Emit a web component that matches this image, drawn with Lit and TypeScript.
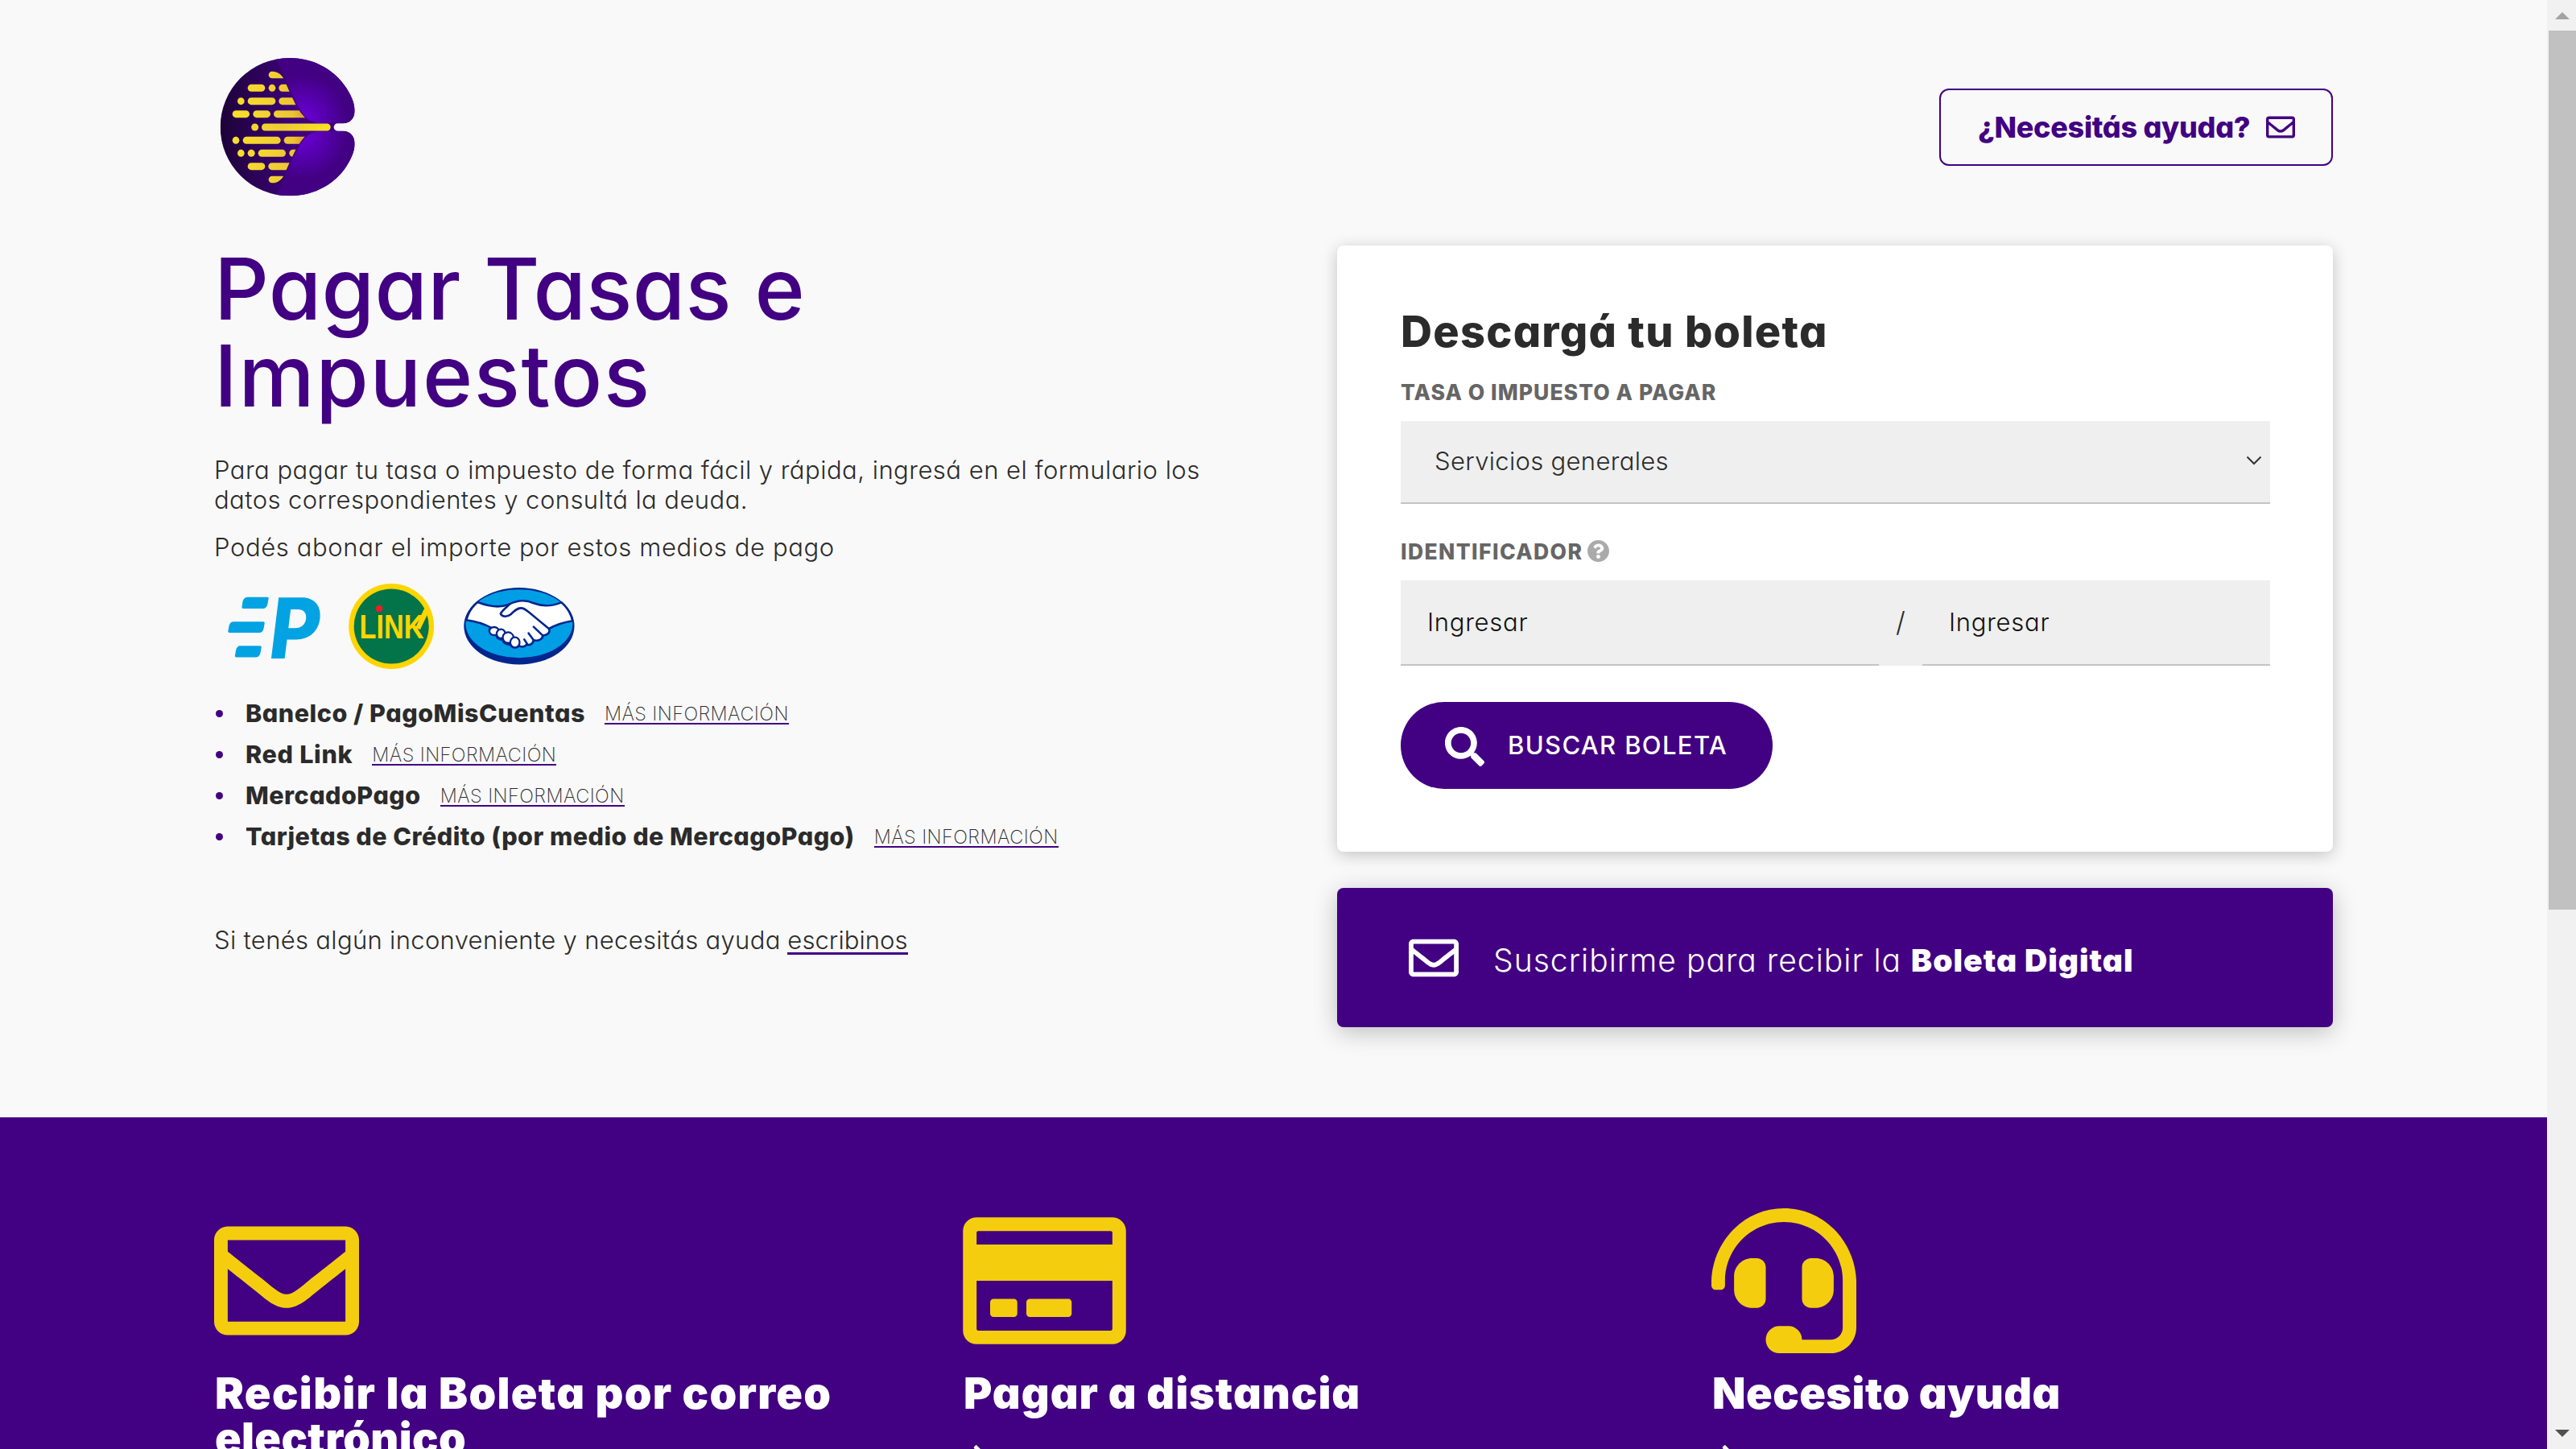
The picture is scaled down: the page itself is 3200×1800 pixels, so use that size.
import { LitElement, html, svg, css } from "lit";
import { customElement } from "lit/decorators.js";
import { styleMap } from "lit/directives/style-map.js";

/** Text run with its own tracking, in em. */
const run = (text: string, tracking: number) =>
  html`<span class="run" style=${styleMap({ letterSpacing: `${tracking}em` })}>${text}</span>`;

const envelope = html`<svg class="icon" viewBox="0 0 512 512"><path fill="currentColor" d="M464 64H48C21.49 64 0 85.49 0 112v288c0 26.51 21.49 48 48 48h416c26.51 0 48-21.49 48-48V112c0-26.51-21.49-48-48-48zm0 48v40.805c-22.422 18.259-58.168 46.651-134.587 106.49-16.841 13.247-50.201 45.072-73.413 44.701-23.208.375-56.579-31.459-73.413-44.701C106.18 199.465 70.425 171.067 48 152.805V112h416zM48 400V214.398c22.914 18.251 55.409 43.862 104.938 82.646 21.857 17.205 60.134 55.186 103.062 54.955 42.717.231 80.509-37.199 103.053-54.947 49.528-38.783 82.032-64.401 104.947-82.653V400H48z"/></svg>`;
const card = html`<svg class="icon wide" viewBox="0 0 576 512"><path fill="currentColor" d="M527.9 32H48.1C21.5 32 0 53.5 0 80v352c0 26.5 21.5 48 48.1 48h479.8c26.6 0 48.1-21.5 48.1-48V80c0-26.5-21.5-48-48.1-48zM54.1 80h467.8c3.3 0 6 2.7 6 6v42H48.1V86c0-3.3 2.7-6 6-6zm467.8 352H54.1c-3.3 0-6-2.7-6-6V256h479.8v170c0 3.3-2.7 6-6 6zM192 332v40c0 6.6-5.4 12-12 12h-72c-6.6 0-12-5.4-12-12v-40c0-6.6 5.4-12 12-12h72c6.6 0 12 5.4 12 12zm192 0v40c0 6.6-5.4 12-12 12H236c-6.6 0-12-5.4-12-12v-40c0-6.6 5.4-12 12-12h136c6.6 0 12 5.4 12 12z"/></svg>`;
const headset = html`<svg class="icon" viewBox="0 0 512 512"><path fill="currentColor" d="M192 208c0-17.67-14.33-32-32-32h-16c-35.35 0-64 28.65-64 64v48c0 35.35 28.65 64 64 64h16c17.67 0 32-14.33 32-32V208zm176 144c35.35 0 64-28.65 64-64v-48c0-35.35-28.65-64-64-64h-16c-17.67 0-32 14.33-32 32v112c0 17.67 14.33 32 32 32h16zM256 0C113.18 0 4.58 118.83 0 256v16c0 8.84 7.16 16 16 16h16c8.84 0 16-7.16 16-16v-16c0-114.69 93.31-208 208-208s208 93.31 208 208h-.12c.08 2.43.12 165.72.12 165.72 0 23.35-18.93 42.28-42.28 42.28H320c0-26.51-21.49-48-48-48h-32c-26.51 0-48 21.49-48 48s21.49 48 48 48h181.72c49.86 0 90.28-40.42 90.28-90.28V256C507.42 118.83 398.82 0 256 0z"/></svg>`;
const search = html`<svg class="icon" viewBox="0 0 512 512"><path fill="currentColor" d="M505 442.7L405.3 343c-4.5-4.5-10.6-7-17-7H372c27.6-35.3 44-79.7 44-128C416 93.1 322.9 0 208 0S0 93.1 0 208s93.1 208 208 208c48.3 0 92.7-16.4 128-44v16.3c0 6.4 2.5 12.5 7 17l99.7 99.7c9.4 9.4 24.6 9.4 33.9 0l28.3-28.3c9.4-9.4 9.4-24.6.1-34zM208 336c-70.7 0-128-57.2-128-128 0-70.7 57.2-128 128-128 70.7 0 128 57.2 128 128 0 70.7-57.2 128-128 128z"/></svg>`;
const question = html`<svg class="icon hint" viewBox="8 8 496 496"><path fill="currentColor" d="M504 256c0 136.997-111.043 248-248 248S8 392.997 8 256C8 119.083 119.043 8 256 8s248 111.083 248 248zM262.655 90c-54.497 0-89.255 22.957-116.549 63.758-3.536 5.286-2.353 12.415 2.715 16.258l34.699 26.31c5.205 3.947 12.621 3.008 16.665-2.122 17.864-22.658 30.113-35.797 57.303-35.797 20.429 0 45.698 13.148 45.698 32.958 0 14.976-12.363 22.667-32.534 33.976C247.128 238.528 216 254.941 216 296v4c0 6.627 5.373 12 12 12h56c6.627 0 12-5.373 12-12v-1.333c0-28.462 83.186-29.647 83.186-106.667 0-58.002-60.165-102-116.531-102zM256 338c-25.365 0-46 20.635-46 46 0 25.364 20.635 46 46 46s46-20.636 46-46c0-25.364-20.635-46-46-46z"/></svg>`;
const chevronRight = html`<svg class="next" viewBox="0 0 320 512"><path fill="currentColor" d="M285.476 272.971L91.132 467.314c-9.373 9.373-24.569 9.373-33.941 0l-22.667-22.667c-9.357-9.357-9.375-24.522-.04-33.901L188.505 256 34.484 101.255c-9.335-9.379-9.317-24.544.04-33.901l22.667-22.667c9.373-9.373 24.569-9.373 33.941 0L285.475 239.03c9.373 9.372 9.373 24.568.001 33.941z"/></svg>`;

/** [x start, x end, y centre] of every pill in the logo. */
const pills: number[][] = [
  [203, 268, 178], [281, 307, 178], [319, 400, 178],
  [165, 191, 227], [203, 307, 227], [319, 420, 227],
  [146, 210, 275], [223, 288, 275], [300, 450, 275],
  [146, 172, 373], [185, 326, 373], [338, 450, 373],
  [165, 191, 421], [203, 230, 421], [242, 345, 421], [358, 420, 421],
  [203, 268, 470], [280, 400, 470],
];
const pill = ([a, b, y]: number[]) =>
  svg`<rect x=${a} y=${y - 13.5} width=${b - a} height="27" rx="13.5"/>`;

const logo = html`<svg class="logo" viewBox="78 54 540 540">
  <defs>
    <linearGradient id="body" gradientUnits="userSpaceOnUse" x1="101" y1="0" x2="400" y2="0"><stop offset="0" stop-color="#1d0338"/><stop offset="1" stop-color="#400080"/></linearGradient>
    <radialGradient id="glow" gradientUnits="userSpaceOnUse" cx="412" cy="288" r="160"><stop offset="0" stop-color="#6900d6"/><stop offset="1" stop-color="#420082"/></radialGradient>
    <radialGradient id="glow2" gradientUnits="userSpaceOnUse" cx="412" cy="358" r="160"><stop offset="0" stop-color="#6900d6"/><stop offset="1" stop-color="#420082"/></radialGradient>
    <linearGradient id="gold" gradientUnits="userSpaceOnUse" x1="146" y1="0" x2="412" y2="0"><stop offset="0" stop-color="#fae02a"/><stop offset=".6" stop-color="#f0cf33"/><stop offset=".85" stop-color="#ecc433"/><stop offset="1" stop-color="#dfa02a"/></linearGradient>
    <linearGradient id="beam" gradientUnits="userSpaceOnUse" x1="217" y1="0" x2="512" y2="0"><stop offset="0" stop-color="#f4d82c"/><stop offset=".4" stop-color="#eccb33"/><stop offset="1" stop-color="#fae322"/></linearGradient>
    <clipPath id="disc"><path d="M358 66C455 66 538 115 581 195C595 220 601 240 602 262C602 290 585 310 558 310H538a14 14 0 0 0 0 28H558C585 338 602 358 602 386C601 408 595 428 581 453C538 532 455 580 358 580A257 257 0 0 1 358 66Z"/></clipPath>
    <clipPath id="wedge"><path d="M100 60H300L337 142L358 190L382 240Q398 270 422 295V352Q398 378 382 408L358 458L337 506L300 590H100Z"/></clipPath>
  </defs>
  <g clip-path="url(#disc)">
    <rect x="78" y="54" width="540" height="540" fill="url(#body)"/>
    <path fill="url(#glow)" d="M300 54C338 120 360 195 388 240C410 280 430 308 475 310H640V54Z"/>
    <path fill="url(#glow2)" d="M300 594C338 528 360 453 388 408C410 368 430 340 475 338H640V594Z"/>
  </g>
  <g fill="url(#gold)" clip-path="url(#wedge)">
    ${pills.map(pill)}
    <path d="M294 116C315 116 328 128 337 142H294a13 13 0 0 1 0-26ZM294 532C315 532 328 520 337 506H294a13 13 0 0 0 0 26Z"/>
  </g>
  <g fill="url(#beam)"><circle cx="230" cy="324" r="13.5"/><rect x="255" y="310.500" width="257" height="27" rx="13.5"/></g>
</svg>`;

const payments = html`<svg class="payments" viewBox="16 40 480 120">
  <g fill="#03a3e3">
    <path d="M58 61.700H82q2 0 1.600 2L82.500 70q-1.300 6-6 6H52q-1.800 0-1.500-2L51.500 67q1.500-5.300 6.500-5.300ZM40.500 92.300H77q2 0 1.700 2L77.500 101q-1.200 5-5.500 5H35q-2 0-1.600-2L34.500 97.500q1.200-5.200 6-5.200ZM48.500 122.300H73q2 0 1.700 2L73.500 131q-1.200 5.500-6 5.500H43.500q-2 0-1.600-2L43 128q1.200-5.700 5.500-5.700Z"/>
    <text transform="translate(81.500 137.500) skewX(-7)" font-family="Inter" font-weight="800" font-size="104" textLength="63" lengthAdjust="spacingAndGlyphs">P</text>
  </g>
  <circle cx="236.200" cy="98" r="53" fill="#ffd500"/><circle cx="236.200" cy="98" r="46.500" fill="#037349"/>
  <path d="M266 100L276 78L281 71L283 79L272 102Z" fill="#ffd500"/>
  <text x="196.500" y="113.300" fill="#ffd500" font-family="Liberation Sans" font-weight="700" font-size="42" textLength="80" lengthAdjust="spacingAndGlyphs">LINK</text>
  <circle cx="221" cy="76" r="4.300" fill="#ee1c25"/>
  <ellipse cx="394.900" cy="97.700" rx="68.600" ry="47.700" fill="#00258e"/>
  <ellipse cx="394.900" cy="94.700" rx="66.500" ry="42.500" fill="#009ee5"/>
  <g transform="scale(.4464 .3333)" fill="#fff" stroke="#00258e" stroke-linejoin="round" stroke-linecap="round">
    <path vector-effect="non-scaling-stroke" stroke-width="2.600" d="M769 204C800 220 830 226 855 213C880 196 905 195 925 208C950 221 975 220 1002 205Q1028 235 1033 274C1005 280 985 290 968 303C972 318 962 328 951 328C949 344 937 350 925 346C922 362 912 366 905 362C900 372 888 372 884 366C878 378 864 374 860 362C846 362 838 352 840 344C828 344 820 336 822 326C806 328 798 312 804 302L806 299C785 284 765 276 738 271Q744 232 769 204Z"/>
    <g stroke-width="2.300"><ellipse vector-effect="non-scaling-stroke" cx="815" cy="312" rx="13" ry="15"/><ellipse vector-effect="non-scaling-stroke" cx="834" cy="322" rx="12" ry="17"/><ellipse vector-effect="non-scaling-stroke" cx="854" cy="336" rx="15" ry="20"/><ellipse vector-effect="non-scaling-stroke" cx="873" cy="354" rx="13" ry="19"/></g>
    <path stroke="none" d="M822 290L856 300L866 320L884 334L892 350L930 330L930 270Z"/>
    <path fill="none" vector-effect="non-scaling-stroke" stroke-width="2.600" d="M858 212C847 226 837 236 833 247C838 261 853 259 861 250C870 238 878 226 890 226C900 226 906 236 914 244L968 304M925 296L950 328M911 320L925 346M899 343L908 362"/>
  </g>
</svg>`;

const methods: [string, number][] = [
  ["Banelco / PagoMisCuentas", 0.0177],
  ["Red Link", 0.0233],
  ["MercadoPago", 0.0158],
  ["Tarjetas de Crédito (por medio de MercagoPago)", 0.0163],
];

@customElement("app-root")
export class AppRoot extends LitElement {
  static styles = css`
    :host { display: block; font-family: Inter, "Open Sans", sans-serif; font-feature-settings: "cv11"; color: #2b2b2b; }
    * { box-sizing: border-box; }
    h1, h2, h3, p, ul { margin: 0; padding: 0; font-weight: inherit; }
    .window { display: flex; height: 1800px; overflow: hidden; background: #f9f9f9; }
    .page { flex: 1; min-width: 0; height: 1800px; overflow: hidden; }
    .run { white-space: nowrap; }
    .icon { display: block; flex: none; }
    .hero { height: 1388px; padding: 68px 266px 0; }
    .top { display: flex; justify-content: space-between; align-items: center; height: 180px; }
    .logo { width: 180px; height: 180px; display: block; }
    .help { width: 489px; height: 96px; border: 2px solid #420082; border-radius: 12px; display: flex; align-items: center; justify-content: space-between; padding: 0 45px 0 46px; color: #420082; font-size: 36px; font-weight: 800; }
    .help .icon { width: 36px; height: 36px; }
    .columns { display: flex; justify-content: space-between; align-items: flex-start; margin-top: 56px; }
    .intro { width: 1290px; }
    h1 { font-size: 106px; font-weight: 500; line-height: 108px; color: #420082; padding-top: 1px; }
    h1 .run, h3 .run { display: block; }
    .copy { font-size: 31px; font-weight: 300; line-height: 37px; }
    .lead { margin-top: 44px; }
    .lead .run { display: block; }
    .ways { margin-top: 22px; }
    .payments { display: block; width: 480px; height: 120px; margin-top: 22px; }
    ul { list-style: none; margin-top: 20px; }
    li { display: flex; align-items: center; height: 51px; font-size: 30.5px; font-weight: 800; }
    li::before { content: ""; width: 9px; height: 9px; border-radius: 50%; background: #420082; margin: 2px 28px 0 2px; }
    .more { margin: 6px 0 0 24px; font-size: 23.5px; font-weight: 200; line-height: 20px; border-bottom: 2px solid #420082; padding-bottom: 1px; }
    .contact { margin-top: 85px; }
    .write { border-bottom: 3px solid #420082; display: inline-block; line-height: 31px; }
    .side { width: 1237px; }
    .card { margin-top: 1px; height: 753px; padding: 79px 78px 0 79px; background: #fff; border-radius: 8px; box-shadow: 0 4px 20px rgba(0, 0, 0, .22); }
    h2 { font-size: 54px; font-weight: 800; line-height: 56px; }
    .label { display: flex; align-items: center; gap: 6px; height: 28px; font-size: 26.5px; font-weight: 800; color: #666; margin-top: 45px; padding-bottom: 1px; }
    .label.first { margin-top: 33px; }
    .hint { width: 27px; height: 27px; color: #aaa; }
    .field { background: #efefef; border-bottom: 2px solid #c4c4c4; font-size: 31px; font-weight: 300; display: flex; align-items: center; }
    .select { height: 103px; margin-top: 22px; padding: 0 10px 3px 42px; justify-content: space-between; }
    .select svg { width: 20px; height: 12px; }
    .pair { display: flex; height: 106px; margin-top: 22px; background: #efefef; }
    .first-input { width: 594px; }
    .slash { width: 54px; font-size: 34px; font-weight: 300; display: flex; align-items: center; justify-content: center; padding-bottom: 3px; }
    .second-input { flex: 1; }
    .pair .field { padding: 0 0 2px 33px; color: #111; }
    .search { display: flex; align-items: center; width: 462px; height: 108px; margin-top: 45px; padding-left: 55px; border-radius: 54px; background: #420082; color: #fff; font-size: 31px; font-weight: 500; gap: 29px; padding-bottom: 1px; }
    .search .icon { width: 49px; height: 49px; margin-top: 3px; }
    .banner { display: flex; align-items: center; margin-top: 45px; height: 173px; padding-left: 89px; gap: 43px; border-radius: 8px; background: #420082; color: #fff; box-shadow: 0 6px 30px rgba(0, 0, 0, .24); font-size: 39px; font-weight: 300; }
    .banner .icon { width: 62px; height: 62px; }
    .banner p { padding-top: 5px; white-space: nowrap; }
    .banner b { font-weight: 900; margin-left: 12px; }
    .services { display: grid; grid-template-columns: repeat(3, 930px); height: 412px; padding: 113px 0 0 266px; background: #420082; color: #fff; overflow: hidden; }
    .service .icon { width: 180px; height: 180px; color: #f5cd0f; }
    .service .wide { width: 203px; }
    h3 { margin-top: 22px; font-size: 54px; font-weight: 900; line-height: 56px; margin-left: 1px; }
    .next { display: block; height: 32px; width: 20px; margin: 34px 0 0 12px; }
    .scrollbar { width: 36px; padding-left: 2px; background: #f1f1f1; display: flex; flex-direction: column; align-items: center; justify-content: space-between; }
    .scrollbar svg { display: block; width: 34px; height: 38px; flex: none; }
    .thumb { width: 34px; height: 1092px; background: #c1c1c1; margin-bottom: auto; }
  `;

  render() {
    return html`<div class="window">
      <div class="page">
        <section class="hero">
          <header class="top">${logo}<a class="help">${run("¿Necesitás ayuda?", -0.0085)}${envelope}</a></header>
          <div class="columns">
            <div class="intro">
              <h1>${run("Pagar Tasas e", 0.003)}${run("Impuestos", 0.0155)}</h1>
              <p class="copy lead">
                ${run("Para pagar tu tasa o impuesto de forma fácil y rápida, ingresá en el formulario los", 0.0158)}
                ${run("datos correspondientes y consultá la deuda.", 0.0141)}
              </p>
              <p class="copy ways">${run("Podés abonar el importe por estos medios de pago", 0.0202)}</p>
              ${payments}
              <ul>${methods.map(([name, ls]) => html`<li>${run(name, ls)}<a class="more">${run("MÁS INFORMACIÓN", 0.018)}</a></li>`)}</ul>
              <p class="copy contact">${run("Si tenés algún inconveniente y necesitás ayuda", 0.0105)} <a class="write">${run("escribinos", 0.0021)}</a></p>
            </div>
            <div class="side">
              <div class="card">
                <h2>${run("Descargá tu boleta", 0.0235)}</h2>
                <div class="label first">${run("TASA O IMPUESTO A PAGAR", 0.0395)}</div>
                <div class="field select">${run("Servicios generales", 0.0105)}
                  <svg viewBox="0 0 20 12"><path d="M1.500 1.500L10 10L18.500 1.500" fill="none" stroke="#333" stroke-width="2"/></svg>
                </div>
                <div class="label">${run("IDENTIFICADOR", 0.0527)}${question}</div>
                <div class="pair">
                  <div class="field first-input">${run("Ingresar", 0.0235)}</div>
                  <span class="slash">/</span>
                  <div class="field second-input">${run("Ingresar", 0.0235)}</div>
                </div>
                <a class="search">${search}${run("BUSCAR BOLETA", 0.0435)}</a>
              </div>
              <a class="banner">${envelope}<p>${run("Suscribirme para recibir la", 0.0262)}<b>${run("Boleta Digital", 0.0263)}</b></p></a>
            </div>
          </div>
        </section>
        <section class="services">
          <div class="service">${envelope}<h3>${run("Recibir la Boleta por correo", 0.0245)}${run("electrónico", 0.006)}</h3></div>
          <div class="service">${card}<h3>${run("Pagar a distancia", 0.0185)}</h3>${chevronRight}</div>
          <div class="service">${headset}<h3>${run("Necesito ayuda", 0.008)}</h3>${chevronRight}</div>
        </section>
      </div>
      <div class="scrollbar">
        <svg viewBox="0 0 34 38"><path d="M8 24L17 15L26 24Z" fill="#a3a3a3"/></svg>
        <div class="thumb"></div>
        <svg viewBox="0 0 34 38"><path d="M8 14L17 23L26 14Z" fill="#505050"/></svg>
      </div>
    </div>`;
  }
}
